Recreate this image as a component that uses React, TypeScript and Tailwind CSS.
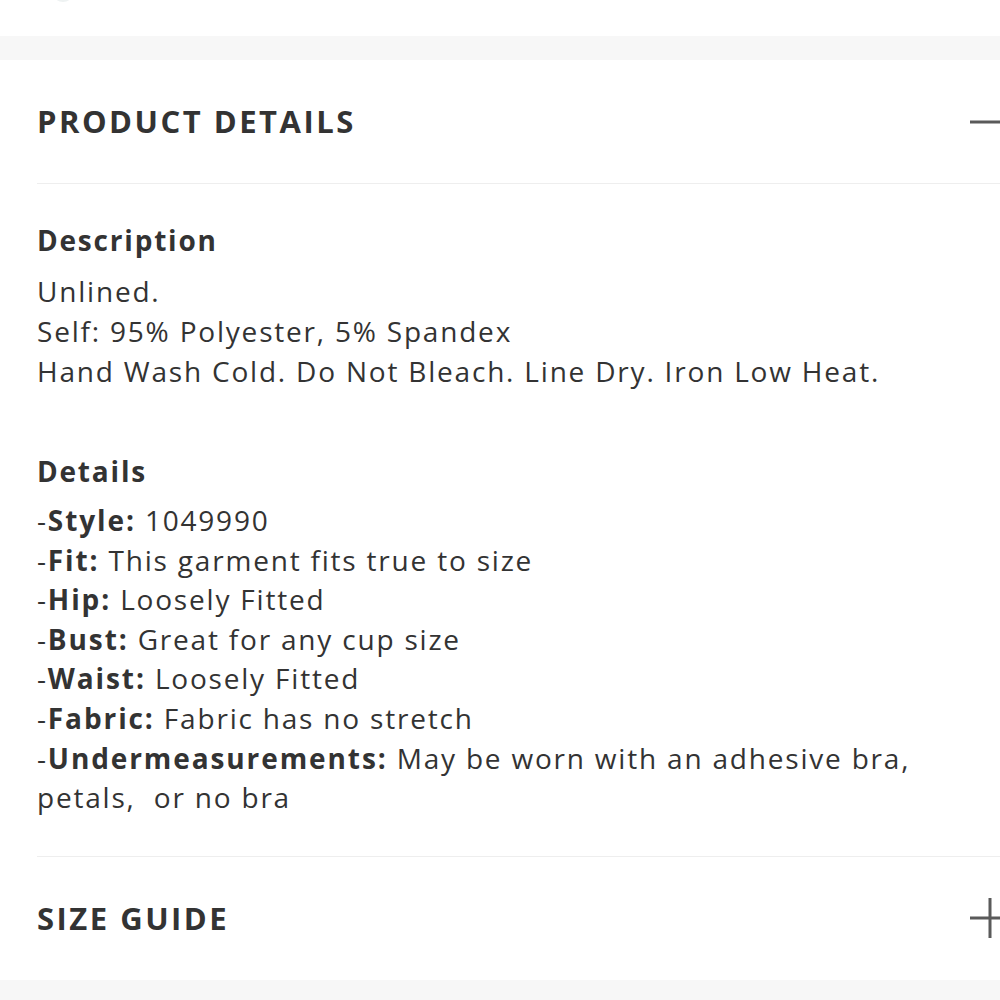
import React from "react";

const font = { fontFamily: '"Open Sans", "DejaVu Sans", sans-serif' };

function Minus() {
  return (
    <svg width="40" height="40" viewBox="0 0 40 40" className="mr-[-10px] shrink-0">
      <rect x="0" y="18.5" width="40" height="3" fill="#5a5a5a" />
    </svg>
  );
}

function Plus() {
  return (
    <svg width="40" height="40" viewBox="0 0 40 40" className="mr-[-10px] shrink-0">
      <rect x="0" y="18.5" width="40" height="3" fill="#5a5a5a" />
      <rect x="18.5" y="0" width="3" height="40" fill="#5a5a5a" />
    </svg>
  );
}

const details: [string, string][] = [
  ["Style:", "1049990"],
  ["Fit:", "This garment fits true to size"],
  ["Hip:", "Loosely Fitted"],
  ["Bust:", "Great for any cup size"],
  ["Waist:", "Loosely Fitted"],
  ["Fabric:", "Fabric has no stretch"],
  ["Undermeasurements:", "May be worn with an adhesive bra, petals,\u00a0 or no bra"],
];

export default function App() {
  return (
    <div className="w-[1000px] h-[1000px] overflow-hidden bg-white text-[#333333]" style={font}>
      <div className="h-[36px] bg-white relative">
        <div className="absolute left-[52px] top-[-20px] w-[22px] h-[22px] rounded-full border-2 border-[#eef2f2]" />
      </div>
      <div className="h-[24px] bg-[#f7f7f7]" />
      <div className="pl-[37px]">
        <div className="h-[124px] flex items-center justify-between border-b border-[#eeeeee]">
          <h2 className="text-[31px] font-bold tracking-[2.5px] leading-none">PRODUCT DETAILS</h2>
          <Minus />
        </div>
        <div className="pt-[36px] pr-[40px] border-b border-[#eeeeee] pb-[38px]">
          <h3 className="text-[28px] font-bold leading-[40px] tracking-[1.8px] mb-[11px]">Description</h3>
          <div className="text-[28px] leading-[40px] tracking-[1.8px]">
            <p>Unlined.</p>
            <p>Self: 95% Polyester, 5% Spandex</p>
            <p>Hand Wash Cold. Do Not Bleach. Line Dry. Iron Low Heat.</p>
          </div>
          <h3 className="mt-[60px] text-[28px] font-bold leading-[40px] tracking-[1.8px] mb-[10px]">Details</h3>
          <div className="text-[28px] leading-[39.6px] tracking-[1.8px]">
            {details.map(([k, v]) => (
              <p key={k}>
                -<span className="font-bold tracking-[1.9px]">{k}</span> {v}
              </p>
            ))}
          </div>
        </div>
        <div className="h-[123px] flex items-center justify-between">
          <h2 className="text-[31px] font-bold tracking-[2.5px] leading-none">SIZE GUIDE</h2>
          <Plus />
        </div>
      </div>
      <div className="h-[40px] bg-[#f7f7f7]" />
    </div>
  );
}
